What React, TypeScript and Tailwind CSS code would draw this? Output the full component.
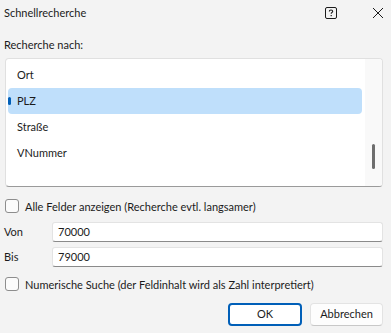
import React from "react";

const font = { fontFamily: 'Lato, "Noto Sans", sans-serif' };

const items = ["Ort", "PLZ", "Straße", "VNummer"];

const Checkbox = ({ label }: { label: string }) => (
  <div className="flex items-center h-[16px]">
    <div className="w-[14px] h-[14px] ml-[5px] rounded-[3px] border border-[#8d8d8d] bg-[#fbfbfb]" />
    <span className="ml-[6px] text-[11px] text-[#1b1b1b] leading-none">{label}</span>
  </div>
);

const Field = ({ label, value }: { label: string; value: string }) => (
  <div className="flex items-center h-[20px]">
    <span className="w-[52px] pl-[4px] text-[11px] text-[#1b1b1b]">{label}</span>
    <div className="flex-1 mr-[8px] h-[20px] flex items-center bg-white rounded-[3px] border border-[#e3e3e3] border-b-[#8a8a8a] pl-[5px] text-[11px] text-[#1b1b1b]">
      {value}
    </div>
  </div>
);

export default function App() {
  return (
    <div className="w-[391px] h-[333px] bg-[#f3f3f3] overflow-hidden flex flex-col" style={font}>
      {/* title bar */}
      <div className="h-[26px] flex items-center">
        <span className="pl-[4px] text-[11px] text-[#1b1b1b]">Schnellrecherche</span>
        <div className="flex-1" />
        <svg width="12" height="12" viewBox="0 0 12 12" className="mr-[35px]">
          <rect x="0.5" y="0.5" width="11" height="11" rx="1.5" fill="none" stroke="#1b1b1b" />
          <path d="M4.3 4.6 C4.3 3.6 5 3 6 3 C7 3 7.7 3.6 7.7 4.4 C7.7 5.4 6.2 5.5 6.2 6.8" fill="none" stroke="#1b1b1b" strokeWidth="1.1" />
          <rect x="5.6" y="8" width="1.2" height="1.2" fill="#1b1b1b" />
        </svg>
        <svg width="12" height="12" viewBox="0 0 12 12" className="mr-[7px]">
          <path d="M1 1 L11 11 M11 1 L1 11" stroke="#1b1b1b" strokeWidth="1" />
        </svg>
      </div>

      <div className="h-[13px]" />
      <span className="pl-[4px] text-[11px] leading-[12px] text-[#1b1b1b]">Recherche nach:</span>

      {/* listbox */}
      <div className="mt-[7px] mx-[5px] mr-[8px] h-[129px] bg-white rounded-[4px] border border-[#e0e0e0] border-b-[#9a9a9a] flex overflow-hidden">
        <div className="flex-1 pt-[3px] pl-[2px] pr-[3px]">
          {items.map((it) => (
            <div
              key={it}
              className={
                "relative h-[26px] flex items-center pl-[9px] text-[11px] text-[#1b1b1b] rounded-[4px] " +
                (it === "PLZ" ? "bg-[#bfdffb]" : "")
              }
            >
              {it === "PLZ" && (
                <div className="absolute left-0 top-[9px] w-[3px] h-[8px] rounded-[2px] bg-[#005fb8]" />
              )}
              {it}
            </div>
          ))}
        </div>
        <div className="w-[17px] bg-[#f9f9f9] relative">
          <div className="absolute left-[7px] top-[85px] w-[3px] h-[25px] rounded-[2px] bg-[#6e6e6e]" />
        </div>
      </div>

      <div className="mt-[11px]">
        <Checkbox label="Alle Felder anzeigen (Recherche evtl. langsamer)" />
      </div>

      <div className="mt-[8px] flex flex-col gap-[5px]">
        <Field label="Von" value="70000" />
        <Field label="Bis" value="79000" />
      </div>

      <div className="mt-[9px]">
        <Checkbox label="Numerische Suche (der Feldinhalt wird als Zahl interpretiert)" />
      </div>

      <div className="mt-[11px] flex justify-end gap-[8px] pr-[8px]">
        <button className="w-[74px] h-[23px] bg-white rounded-[4px] border-2 border-[#005fb8] text-[11px] text-[#1b1b1b]">
          OK
        </button>
        <button className="w-[73px] h-[23px] bg-[#fdfdfd] rounded-[4px] border border-[#e3e3e3] border-b-[#c8c8c8] text-[11px] text-[#1b1b1b]">
          Abbrechen
        </button>
      </div>
    </div>
  );
}
